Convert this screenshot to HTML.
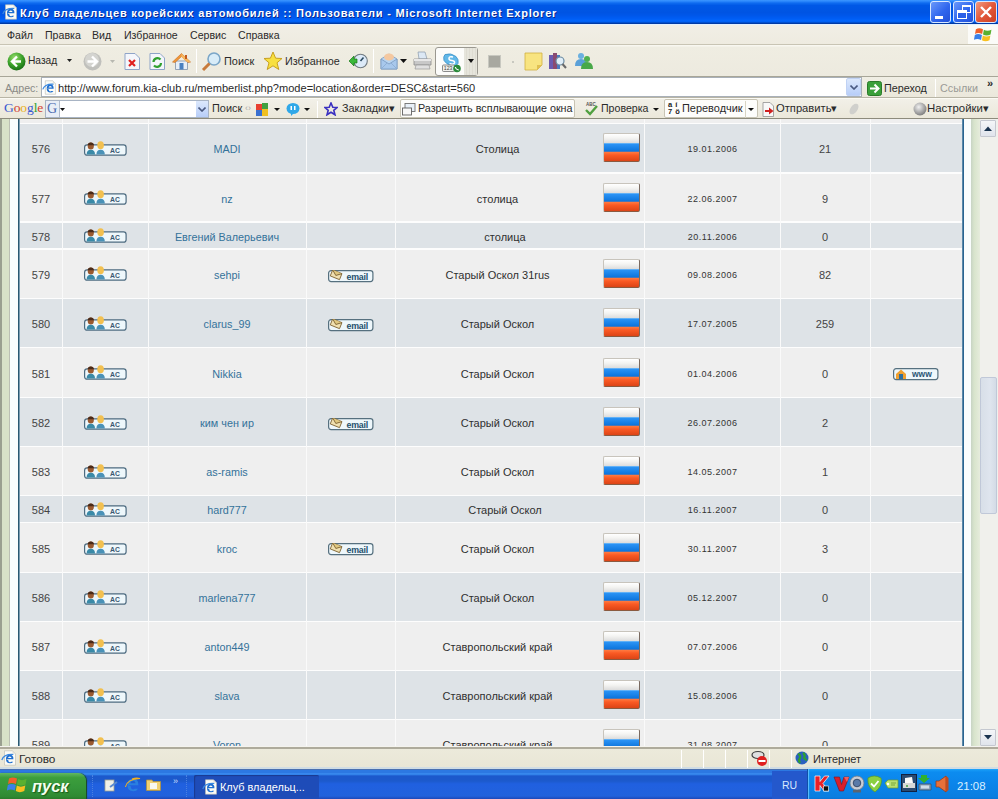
<!DOCTYPE html>
<html><head><meta charset="utf-8">
<style>
html,body{margin:0;padding:0;}
body{width:998px;height:799px;overflow:hidden;position:relative;background:#ece9d8;font-family:"Liberation Sans",sans-serif;}
div,span{position:absolute;box-sizing:border-box;}
.tb{white-space:nowrap;color:#2a2a2a;font-size:10.6px;line-height:12px;}
/* title bar */
#title{left:0;top:0;width:998px;height:25px;z-index:2;
 background:linear-gradient(to bottom,#3c96ff 0%,#2c88fc 5%,#0f6cf0 12%,#0058e6 22%,#0054e3 50%,#0057ea 62%,#005df4 74%,#0266fc 84%,#005ae8 89%,#0044b8 91%,#00349a 95.9%,#d8ecff 96%,#eef6ff 100%);}
#title .txt{left:20px;top:6px;color:#fff;font-weight:700;font-size:11px;line-height:14px;white-space:nowrap;letter-spacing:0.78px;text-shadow:1px 1px 0 #0a2a90;}
.wbtn{top:1px;width:21px;height:22px;border:1px solid #d8e8ff;border-radius:3px;}
/* menu */
#menu{left:0;top:24px;width:998px;height:21px;background:linear-gradient(#f1efe6,#eeebe0);border-bottom:1px solid #c8c4b4;}
#tool{left:0;top:45px;width:998px;height:32px;background:linear-gradient(#f8f7f0 0px,#f8f7f0 1px,#efede2 2px,#edeadf 100%);border-bottom:1px solid #a8a698;}
#addr{left:0;top:77px;width:998px;height:21px;background:linear-gradient(#f0eee4,#ebe8dc);border-bottom:1px solid #b8b5a6;}
#goog{left:0;top:98px;width:998px;height:21px;background:linear-gradient(#f2f0e8,#ebe8da);border-top:1px solid #fbfaf4;border-bottom:1px solid #8d8b7c;}
/* content */
#content{left:0;top:119px;width:998px;height:627px;background:#efefef;overflow:hidden;}
.row{left:20px;width:942px;}
.vsep{top:0;width:1px;height:628px;background:#fafafa;}
.t{text-align:center;white-space:nowrap;line-height:14px;}
.num{font-size:11px;color:#444;}
.link{font-size:10.8px;color:#34729a;}
.loc{font-size:11px;color:#303030;}
.date{font-size:9px;line-height:12px;color:#333;letter-spacing:0.5px;}
.flag{width:37px;height:29px;border-radius:2px;border:1px solid #c8c4bc;border-right-color:#7a6a60;border-bottom-color:#8a5a40;
 background:linear-gradient(#ffffff 0%,#f4f4f2 15%,#dedede 32%,#8cc8f8 33%,#2a92f4 38%,#0c74dc 64%,#ff7a40 67%,#fa5a24 78%,#dc4416 100%);}
/* status */
#status{left:0;top:746px;width:998px;height:22px;background:linear-gradient(#f4f3ee 0px,#f4f3ee 1px,#aeab9c 1px,#aeab9c 3px,#eceadb 3px,#e9e6d6 21.5px,#d0dce4 21.5px);}
#task{left:0;top:768px;width:998px;height:31px;background:linear-gradient(#d0dce4 0px,#d0dce4 0.8px,#4a70b0 0.8px,#4a70b0 1.8px,#2c78e2 1.8px,#2c78e2 5px,#3a8aee 5px,#3282ea 6.5px,#1c58cc 8px,#1c5acc 13px,#2060e0 16px,#2262dc 28px,#1e48b8 31px);}
</style></head><body>

<div id="title">
 <svg style="position:absolute;left:2px;top:4px" width="16" height="16" viewBox="0 0 16 16"><path d="M3.5 0.8 H11.5 L14.5 3.8 V15.2 H3.5z" fill="#fbfbf6" stroke="#b8b8b0" stroke-width="0.6"/><path d="M11.5 0.8 V3.8 H14.5" fill="#e0e0d8"/><path d="M5.2 9.3 H12.4 q0.3-4.6-3.6-4.6 q-3.8 0-3.8 4.3 q0 4.3 4 4.3 q2.3 0 3.2-1.6 h-2.3 q-0.4 0.5-1 0.5 q-1.6 0-1.6-2z M7 8 q0.2-1.6 1.8-1.6 q1.6 0 1.7 1.6z" fill="#1f6fd0"/><path d="M0.8 10 q2-6 11.5-5.5" stroke="#3a88e0" stroke-width="1.2" fill="none"/></svg>
 <div class="txt">Клуб владельцев корейских автомобилей :: Пользователи - Microsoft Internet Explorer</div>
 <div class="wbtn" style="left:930px;background:linear-gradient(135deg,#6a98fa,#2f66ee 55%,#2250d8)"><div style="left:4px;top:14px;width:8px;height:3px;background:#fff"></div></div>
 <div class="wbtn" style="left:953px;background:linear-gradient(135deg,#6a98fa,#2f66ee 55%,#2250d8)"><div style="left:8px;top:3px;width:9px;height:8px;border:1px solid #fff;border-top-width:2px"></div><div style="left:3px;top:8px;width:10px;height:9px;border:1px solid #fff;border-top-width:3px;background:#2a5fe8"></div></div>
 <div class="wbtn" style="left:975px;width:22px;background:linear-gradient(135deg,#f09a80,#e2583a 50%,#cc4024)"><svg style="position:absolute;left:3px;top:3px" width="14" height="14"><path d="M2 2 L12 12 M12 2 L2 12" stroke="#fff" stroke-width="2.4"/></svg></div>
</div>
<div id="menu">
 <div class="tb" style="left:7px;top:5px">Файл</div>
 <div class="tb" style="left:45px;top:5px">Правка</div>
 <div class="tb" style="left:92px;top:5px">Вид</div>
 <div class="tb" style="left:124px;top:5px">Избранное</div>
 <div class="tb" style="left:190px;top:5px">Сервис</div>
 <div class="tb" style="left:238px;top:5px">Справка</div>
 <div style="left:968px;top:0;width:30px;height:20px;background:#fbfbf8"></div>
 <svg style="position:absolute;left:974px;top:3px" width="18" height="16" viewBox="0 0 20 18"><path d="M2 2.5 C4.5 1 7 1 10 2.5 L9 8 C6 6.5 3.5 6.5 1 8z" fill="#f0602a"/><path d="M11 3 C13.5 4.5 16.5 4.5 19.5 3 L18.5 8.5 C15.5 10 12.5 10 10 8.5z" fill="#5ab030"/><path d="M0.8 9 C3.3 7.5 5.8 7.5 8.8 9 L7.8 14.5 C4.8 13 2.3 13 -0.2 14.5z" fill="#3a80e8"/><path d="M9.8 9.5 C12.3 11 15.3 11 18.3 9.5 L17.3 15 C14.3 16.5 11.3 16.5 8.8 15z" fill="#f8c020"/></svg>
</div>
<div id="tool">
 <svg style="position:absolute;left:7px;top:7px" width="19" height="19" viewBox="0 0 19 19"><defs><radialGradient id="gb" cx="40%" cy="30%" r="70%"><stop offset="0" stop-color="#9be070"/><stop offset="0.6" stop-color="#3aa02a"/><stop offset="1" stop-color="#1a7018"/></radialGradient></defs><circle cx="9.5" cy="9.5" r="9" fill="url(#gb)"/><path d="M10 4.5 L5 9.5 L10 14.5 M5.5 9.5 H14" stroke="#fff" stroke-width="2.4" fill="none"/></svg>
 <div class="tb" style="left:28px;top:10px;font-size:10.2px">Назад</div>
 <svg style="position:absolute;left:67px;top:14px" width="5" height="3"><path d="M0 0 H5 L2.5 3z" fill="#222"/></svg>
 <svg style="position:absolute;left:83px;top:7px" width="19" height="19" viewBox="0 0 19 19"><circle cx="9.5" cy="9.5" r="9" fill="#c0c0bc"/><circle cx="9" cy="8" r="7" fill="#d4d4d0"/><path d="M9 4.5 L14 9.5 L9 14.5 M4.5 9.5 H13.5" stroke="#fff" stroke-width="2.4" fill="none"/></svg>
 <svg style="position:absolute;left:110px;top:15px" width="5" height="3"><path d="M0 0 H5 L2.5 3z" fill="#b8b8b0"/></svg>
 <svg style="position:absolute;left:124px;top:8px" width="17" height="17" viewBox="0 0 17 17"><path d="M1 0.5 H11 L15.5 5 V16.5 H1z" fill="#f4f6fb" stroke="#8fa4c8"/><path d="M5 7 L11 13 M11 7 L5 13" stroke="#e02020" stroke-width="2.2"/></svg>
 <svg style="position:absolute;left:149px;top:8px" width="17" height="17" viewBox="0 0 17 17"><path d="M1 0.5 H11 L15.5 5 V16.5 H1z" fill="#f4f6fb" stroke="#8fa4c8"/><path d="M4.5 9 a4 4 0 0 1 7-2.5 M12 10 a4 4 0 0 1 -7 2.5" stroke="#30a030" stroke-width="2.2" fill="none"/></svg>
 <svg style="position:absolute;left:172px;top:7px" width="19" height="19" viewBox="0 0 19 19"><path d="M3.5 9 V17.5 H15.5 V9z" fill="#e8eef6" stroke="#8090a8" stroke-width="0.8"/><path d="M0.5 10 L9.5 1.5 L18.5 10 L16 10.5 L9.5 4.5 L3 10.5z" fill="#f09838" stroke="#c86a20" stroke-width="0.6"/><path d="M9.5 1.5 L18.5 10 L15 10 L9.5 5z" fill="#f8b860"/><rect x="7.5" y="11" width="4" height="6.5" fill="#4a80c0"/><rect x="13" y="3" width="2" height="4" fill="#c05a20"/></svg>
 <div style="left:196px;top:4px;width:1px;height:24px;background:#d0ccbc;border-right:1px solid #fff"></div>
 <svg style="position:absolute;left:201px;top:6px" width="21" height="21" viewBox="0 0 21 21"><circle cx="13" cy="8" r="6" fill="#d8ecf8" stroke="#7aa6c8" stroke-width="1.6"/><path d="M8.5 12.5 L2 19" stroke="#c87a3a" stroke-width="3"/></svg>
 <div class="tb" style="left:224px;top:10px;font-size:10.9px">Поиск</div>
 <svg style="position:absolute;left:263px;top:6px" width="20" height="20" viewBox="0 0 20 20"><path d="M10 1 L12.6 7.2 L19 7.5 L14 11.8 L15.8 18.5 L10 14.8 L4.2 18.5 L6 11.8 L1 7.5 L7.4 7.2z" fill="#f8e040" stroke="#c8a020" stroke-width="1"/></svg>
 <div class="tb" style="left:285px;top:10px;font-size:10.8px">Избранное</div>
 <svg style="position:absolute;left:348px;top:8px" width="20" height="17" viewBox="0 0 20 17"><circle cx="12.5" cy="8" r="6.8" fill="#dceaf8" stroke="#707a80" stroke-width="1.1"/><path d="M12.5 8 L15.5 4.5" stroke="#2a4a60" stroke-width="1.6"/><path d="M1 8 L6 3 V6 H9 V10 H6 V13z" fill="#3ab83a" stroke="#1a7a1a" stroke-width="0.7"/></svg>
 <div style="left:373px;top:4px;width:1px;height:24px;background:#d0ccbc;border-right:1px solid #fff"></div>
 <svg style="position:absolute;left:380px;top:6px" width="18" height="19" viewBox="0 0 18 19"><path d="M1 8 L9 3 L17 8 V18 H1z" fill="#b8d4f0" stroke="#7a9ac0" stroke-width="0.8"/><ellipse cx="9" cy="6" rx="5" ry="3.5" fill="#f4c8a0"/><path d="M1 8 L9 13 L17 8 V18 H1z" fill="#a8c8ec" stroke="#7a9ac0" stroke-width="0.8"/><path d="M1 18 L7 12 M17 18 L11 12" stroke="#8aaad0" stroke-width="0.8"/></svg>
 <svg style="position:absolute;left:400px;top:14px" width="7" height="4"><path d="M0 0 H7 L3.5 4z" fill="#111"/></svg>
 <svg style="position:absolute;left:413px;top:6px" width="19" height="19" viewBox="0 0 19 19"><path d="M5 1 H12 L14 8 H6z" fill="#dce8f4" stroke="#8a9aaa" stroke-width="0.7"/><path d="M1 8 H18 V14 H1z" fill="#c8c8c8" stroke="#8a8a8a" stroke-width="0.8"/><path d="M1 8 H18 V10 H1z" fill="#e8e8e8"/><path d="M3 14 H16 L17 18 H2z" fill="#e0e0e0" stroke="#9a9a9a" stroke-width="0.7"/></svg>
 <div style="left:435px;top:2px;width:43px;height:29px;border:1px solid #9a9890;border-radius:3px;background:#fcfcfa"></div>
 <div style="left:464px;top:3px;width:13px;height:27px;background:repeating-linear-gradient(to right,#e6e5dc 0,#e6e5dc 2px,#dedcd2 2px,#dedcd2 3px)"></div>
 <svg style="position:absolute;left:441px;top:8px" width="21" height="20" viewBox="0 0 21 20"><path d="M4 1.5 q6-2 11 2 q3 3 2 7 q-1 3-6 2 q-6-1-8-5 q-1-4 1-6z" fill="#62b8e8" stroke="#3a90c8" stroke-width="0.8"/><path d="M12 4 q-4-1-4 1.5 q0 2 3 2 q3 0.5 2.5 2.5 q-1 2-5 0.5" stroke="#fff" stroke-width="1.5" fill="none"/><rect x="1.5" y="12" width="12" height="6.5" rx="1" fill="#f0f0ec" stroke="#707070" stroke-width="0.8"/><text x="2.8" y="17.4" font-family="Liberation Sans" font-size="5.2" fill="#444">123</text><circle cx="16" cy="15.5" r="3.8" fill="#2a8a3a"/><path d="M14.3 14 q0.5 2.5 3.5 3" stroke="#fff" stroke-width="1.1" fill="none"/></svg>
 <svg style="position:absolute;left:468px;top:14px" width="6" height="4"><path d="M0 0 H6 L3 4z" fill="#111"/></svg>
 <div style="left:488px;top:10px;width:13px;height:13px;background:#a8a8a0;border:1px solid #c8c8c0"></div>
 <div style="left:512px;top:16px;width:2px;height:2px;background:#c8c8c0"></div>
 <svg style="position:absolute;left:524px;top:7px" width="19" height="19" viewBox="0 0 19 19"><path d="M1 1 H18 V13 L13 18 H1z" fill="#f8e480" stroke="#d0b040" stroke-width="0.8"/><path d="M13 18 V13 H18" fill="#e0c050"/></svg>
 <svg style="position:absolute;left:548px;top:6px" width="19" height="19" viewBox="0 0 19 19"><rect x="1" y="4" width="4" height="14" fill="#6a5ab0"/><rect x="5" y="2" width="4" height="16" fill="#8a4a70"/><rect x="9" y="4" width="3" height="14" fill="#4a7ac0"/><circle cx="12" cy="10" r="4" fill="#e0eef8" stroke="#6a8aa0" stroke-width="1.2"/><path d="M14.5 13 L18 17" stroke="#6a6a6a" stroke-width="2"/></svg>
 <svg style="position:absolute;left:574px;top:7px" width="19" height="18" viewBox="0 0 19 18"><circle cx="7" cy="4" r="3" fill="#6ab0e0"/><path d="M1 14 q0-7 6-7 q6 0 6 7z" fill="#5aa0d8"/><circle cx="13" cy="7" r="3" fill="#50b050"/><path d="M7 17 q0-7 6-7 q6 0 6 7z" fill="#48a848"/></svg>
</div>
<div id="addr">
 <div class="tb" style="left:5px;top:5px;color:#8a8a86;font-size:10.6px">Адрес:</div>
 <div style="left:41px;top:0px;width:821px;height:20px;background:#fff;border:1px solid #a9b0b8"></div>
 <svg style="position:absolute;left:42px;top:3px" width="15" height="15" viewBox="0 0 16 16"><path d="M3.5 0.8 H11.5 L14.5 3.8 V15.2 H3.5z" fill="#fbfbf6" stroke="#b8b8b0" stroke-width="0.6"/><path d="M11.5 0.8 V3.8 H14.5" fill="#e0e0d8"/><path d="M5.2 9.3 H12.4 q0.3-4.6-3.6-4.6 q-3.8 0-3.8 4.3 q0 4.3 4 4.3 q2.3 0 3.2-1.6 h-2.3 q-0.4 0.5-1 0.5 q-1.6 0-1.6-2z M7 8 q0.2-1.6 1.8-1.6 q1.6 0 1.7 1.6z" fill="#1f6fd0"/><path d="M0.8 10 q2-6 11.5-5.5" stroke="#3a88e0" stroke-width="1.2" fill="none"/></svg>
 <div class="tb" style="left:58px;top:5px;font-size:11.05px">http://www.forum.kia-club.ru/memberlist.php?mode=location&amp;order=DESC&amp;start=560</div>
 <div style="left:846px;top:1px;width:15px;height:18px;border-radius:2px;background:linear-gradient(#dce8fc,#b8cef8);border:1px solid #c0d2f4"></div>
 <svg style="position:absolute;left:850px;top:8px" width="8" height="5"><path d="M0.5 0.5 L4 4 L7.5 0.5" stroke="#4a5a80" stroke-width="1.6" fill="none"/></svg>
 <svg style="position:absolute;left:867px;top:4px" width="15" height="15" viewBox="0 0 15 15"><rect x="0.5" y="0.5" width="14" height="14" rx="2" fill="#3aa03a" stroke="#2a7a2a"/><path d="M3 7.5 H11 M7.5 3.5 L11.5 7.5 L7.5 11.5" stroke="#fff" stroke-width="2" fill="none"/></svg>
 <div class="tb" style="left:884px;top:5px;font-size:10.8px">Переход</div>
 <div style="left:935px;top:2px;width:1px;height:18px;background:#d8d4c4;border-right:1px solid #fff"></div>
 <div class="tb" style="left:940px;top:5px;font-size:10.8px;color:#9a9a96">Ссылки</div>
 <div class="tb" style="left:987px;top:0px;font-size:11px;font-weight:700">»</div>
</div>
<div id="goog">
 <div style="left:4px;top:1px;font-family:'Liberation Serif';font-size:13.5px;line-height:15px;font-weight:400;letter-spacing:-0.1px"><span style="position:static;color:#3a5ad0">G</span><span style="position:static;color:#d04030">o</span><span style="position:static;color:#e8b020">o</span><span style="position:static;color:#3a5ad0">g</span><span style="position:static;color:#30a030">l</span><span style="position:static;color:#d04030">e</span></div>
 <div style="left:45px;top:1px;width:164px;height:18px;background:#fff;border:1px solid #a8b4c4"></div>
 <div style="left:46px;top:2px;width:14px;height:16px;background:#e8eef6;border-right:1px solid #b0bccc"></div>
 <div style="left:47px;top:1px;font-family:'Liberation Serif';font-size:14px;line-height:18px;color:#4a6ab0">G</div>
 <svg style="position:absolute;left:60px;top:9px" width="5" height="3"><path d="M0 0 H5 L2.5 3z" fill="#111"/></svg>
 <div style="left:196px;top:2px;width:12px;height:16px;background:linear-gradient(#dce8fc,#b8cef8)"></div>
 <svg style="position:absolute;left:198px;top:8px" width="8" height="5"><path d="M0.5 0.5 L4 4 L7.5 0.5" stroke="#4a5a80" stroke-width="1.6" fill="none"/></svg>
 <div class="tb" style="left:212px;top:3px;font-size:10.9px">Поиск</div>
 <div class="tb" style="left:245px;top:3px;font-size:9px;color:#aaa">‹›</div>
 <svg style="position:absolute;left:255px;top:2px" width="14" height="16" viewBox="0 0 14 16"><rect x="1" y="3" width="6" height="6" fill="#e84030"/><rect x="7" y="2" width="6" height="6" fill="#40a040"/><rect x="1" y="9" width="6" height="6" fill="#3a70d0"/><rect x="7" y="8" width="6" height="7" fill="#f0c020"/></svg>
 <svg style="position:absolute;left:274px;top:9px" width="6" height="3"><path d="M0 0 H6 L3 3z" fill="#111"/></svg>
 <svg style="position:absolute;left:286px;top:3px" width="14" height="15" viewBox="0 0 14 15"><ellipse cx="7" cy="6.5" rx="6.5" ry="5.5" fill="#30a8e8"/><path d="M5 11 L5 14 L8 11z" fill="#30a8e8"/><rect x="4.5" y="4" width="1.5" height="4" fill="#fff"/><rect x="8" y="4" width="1.5" height="4" fill="#fff"/></svg>
 <svg style="position:absolute;left:304px;top:9px" width="6" height="3"><path d="M0 0 H6 L3 3z" fill="#111"/></svg>
 <div style="left:317px;top:2px;width:1px;height:17px;background:#d0ccbc;border-right:1px solid #fff"></div>
 <svg style="position:absolute;left:324px;top:3px" width="14" height="14" viewBox="0 0 14 14"><path d="M7 1 L8.8 5.2 L13.3 5.4 L9.8 8.3 L11 12.8 L7 10.3 L3 12.8 L4.2 8.3 L0.7 5.4 L5.2 5.2z" fill="none" stroke="#3a30c0" stroke-width="1.6"/></svg>
 <div class="tb" style="left:342px;top:3px;font-size:10.8px">Закладки▾</div>
 <div style="left:400px;top:0px;width:175px;height:19px;background:#fdfdfb;border:1px solid #c8c4b4;border-radius:2px"></div>
 <svg style="position:absolute;left:402px;top:4px" width="14" height="13" viewBox="0 0 14 13"><rect x="3" y="0.5" width="10" height="8" fill="#e8f0f8" stroke="#707070" stroke-width="0.9"/><rect x="0.5" y="5" width="9" height="7" fill="#f8f8f8" stroke="#606060" stroke-width="0.9"/></svg>
 <div class="tb" style="left:418px;top:3px;font-size:10.75px">Разрешить всплывающие окна</div>
 <svg style="position:absolute;left:585px;top:2px" width="13" height="15" viewBox="0 0 13 15"><text x="1" y="5" font-family="Liberation Sans" font-size="4.5" font-weight="700" fill="#555">ABC</text><path d="M1 9 L5 13 L12 5" stroke="#50a040" stroke-width="2.4" fill="none"/></svg>
 <div class="tb" style="left:601px;top:3px;font-size:10.6px">Проверка</div>
 <svg style="position:absolute;left:653px;top:9px" width="6" height="3"><path d="M0 0 H6 L3 3z" fill="#111"/></svg>
 <div style="left:664px;top:0px;width:94px;height:19px;background:#fdfdfb;border:1px solid #c8c4b4;border-radius:2px"></div>
 <div style="left:745px;top:2px;width:1px;height:17px;background:#d8d4c4"></div>
 <div class="tb" style="left:668px;top:2px;font-size:7.5px;line-height:7px;font-weight:700;color:#222;letter-spacing:0.5px">a&nbsp;í<br>7&nbsp;ö</div>
 <div class="tb" style="left:682px;top:3px;font-size:10.95px">Переводчик</div>
 <svg style="position:absolute;left:748px;top:9px" width="6" height="3"><path d="M0 0 H6 L3 3z" fill="#111"/></svg>
 <svg style="position:absolute;left:762px;top:3px" width="13" height="15" viewBox="0 0 13 15"><path d="M1 0.5 H8 L11.5 4 V14.5 H1z" fill="#f8f8f8" stroke="#909090" stroke-width="0.8"/><path d="M3 8 H7 V5.5 L11.5 9 L7 12.5 V10 H3z" fill="#d02020"/></svg>
 <div class="tb" style="left:776px;top:3px;font-size:11.2px">Отправить▾</div>
 <svg style="position:absolute;left:848px;top:3px" width="12" height="14" viewBox="0 0 12 14"><ellipse cx="6" cy="7" rx="3.5" ry="6" transform="rotate(35 6 7)" fill="#d0d0cc"/></svg>
 <svg style="position:absolute;left:913px;top:3px" width="14" height="14" viewBox="0 0 14 14"><defs><radialGradient id="gs" cx="40%" cy="35%" r="65%"><stop offset="0" stop-color="#f0f0f0"/><stop offset="1" stop-color="#808080"/></radialGradient></defs><circle cx="7" cy="7" r="6.5" fill="url(#gs)"/></svg>
 <div class="tb" style="left:927px;top:3px;font-size:11.4px">Настройки▾</div>
</div>
<div id="content">
 <div style="left:0;top:0;width:2px;height:628px;background:#9aa090"></div>
 <div style="left:2px;top:0;width:7px;height:628px;background:#d8e2c8"></div>
 <div style="left:9px;top:0;width:1px;height:628px;background:#bcc0b4"></div>
 <div style="left:10px;top:0;width:8px;height:628px;background:#fafdfd"></div>
 <div style="left:18px;top:0;width:1px;height:628px;background:#2a5870"></div><div style="left:19px;top:0;width:1px;height:628px;background:#7a9cb0"></div>
 <div style="left:20px;top:0;width:942px;height:628px;background:#fdfdfd"></div>
<div class="row" style="top:-19px;height:23px;background:#efefef"></div>
<div class="row" style="top:5px;height:48px;background:#dee3e7"></div>
<div class="t num" style="left:20px;width:42px;top:23.1px">576</div>
<div class="prof" style="left:84px;top:20.5px"><svg width="43" height="17" viewBox="0 0 43 17"><rect x="0.6" y="4.9" width="41.5" height="10.3" rx="2.5" fill="#eef7fb" stroke="#4d6b80" stroke-width="1.2"/><ellipse cx="6.8" cy="6" rx="3.1" ry="3.5" fill="#9a5a30"/><path d="M6.8 2.5 a3.2 3.2 0 0 1 3.2 2.8 h-6.4 a3.2 3.2 0 0 1 3.2-2.8z" fill="#4a2a18"/><path d="M2.6 14.5 q0-4.8 4.2-4.8 q4.2 0 4.2 4.8z" fill="#3a8aa8"/><ellipse cx="16.6" cy="5.2" rx="3.3" ry="4" fill="#f2c050"/><path d="M12.4 14.5 q0-4.8 4.2-4.8 q4.2 0 4.2 4.8z" fill="#4a92b8"/><text x="26" y="13" font-family="Liberation Sans" font-size="6.8" font-weight="700" fill="#3a5670">AC</text></svg></div>
<div class="t link" style="left:148px;width:158px;top:23.1px">MADI</div>
<div class="t loc" style="left:395px;width:205px;top:23.1px">Столица</div>
<div class="flag" style="left:603px;top:14.0px"></div>
<div class="t date" style="left:645px;width:135px;top:24.0px">19.01.2006</div>
<div class="t num" style="left:780px;width:90px;top:23.1px">21</div>
<div class="row" style="top:55px;height:47px;background:#efefef"></div>
<div class="t num" style="left:20px;width:42px;top:72.6px">577</div>
<div class="prof" style="left:84px;top:70.0px"><svg width="43" height="17" viewBox="0 0 43 17"><rect x="0.6" y="4.9" width="41.5" height="10.3" rx="2.5" fill="#eef7fb" stroke="#4d6b80" stroke-width="1.2"/><ellipse cx="6.8" cy="6" rx="3.1" ry="3.5" fill="#9a5a30"/><path d="M6.8 2.5 a3.2 3.2 0 0 1 3.2 2.8 h-6.4 a3.2 3.2 0 0 1 3.2-2.8z" fill="#4a2a18"/><path d="M2.6 14.5 q0-4.8 4.2-4.8 q4.2 0 4.2 4.8z" fill="#3a8aa8"/><ellipse cx="16.6" cy="5.2" rx="3.3" ry="4" fill="#f2c050"/><path d="M12.4 14.5 q0-4.8 4.2-4.8 q4.2 0 4.2 4.8z" fill="#4a92b8"/><text x="26" y="13" font-family="Liberation Sans" font-size="6.8" font-weight="700" fill="#3a5670">AC</text></svg></div>
<div class="t link" style="left:148px;width:158px;top:72.6px">nz</div>
<div class="t loc" style="left:395px;width:205px;top:72.6px">столица</div>
<div class="flag" style="left:603px;top:63.5px"></div>
<div class="t date" style="left:645px;width:135px;top:73.5px">22.06.2007</div>
<div class="t num" style="left:780px;width:90px;top:72.6px">9</div>
<div class="row" style="top:104px;height:25px;background:#dee3e7"></div>
<div class="t num" style="left:20px;width:42px;top:110.6px">578</div>
<div class="prof" style="left:84px;top:108.0px"><svg width="43" height="17" viewBox="0 0 43 17"><rect x="0.6" y="4.9" width="41.5" height="10.3" rx="2.5" fill="#eef7fb" stroke="#4d6b80" stroke-width="1.2"/><ellipse cx="6.8" cy="6" rx="3.1" ry="3.5" fill="#9a5a30"/><path d="M6.8 2.5 a3.2 3.2 0 0 1 3.2 2.8 h-6.4 a3.2 3.2 0 0 1 3.2-2.8z" fill="#4a2a18"/><path d="M2.6 14.5 q0-4.8 4.2-4.8 q4.2 0 4.2 4.8z" fill="#3a8aa8"/><ellipse cx="16.6" cy="5.2" rx="3.3" ry="4" fill="#f2c050"/><path d="M12.4 14.5 q0-4.8 4.2-4.8 q4.2 0 4.2 4.8z" fill="#4a92b8"/><text x="26" y="13" font-family="Liberation Sans" font-size="6.8" font-weight="700" fill="#3a5670">AC</text></svg></div>
<div class="t link" style="left:148px;width:158px;top:110.6px">Евгений Валерьевич</div>
<div class="t loc" style="left:395px;width:220px;top:110.6px">столица</div>
<div class="t date" style="left:645px;width:135px;top:111.5px">20.11.2006</div>
<div class="t num" style="left:780px;width:90px;top:110.6px">0</div>
<div class="row" style="top:130.5px;height:48.5px;background:#efefef"></div>
<div class="t num" style="left:20px;width:42px;top:148.85px">579</div>
<div class="prof" style="left:84px;top:146.25px"><svg width="43" height="17" viewBox="0 0 43 17"><rect x="0.6" y="4.9" width="41.5" height="10.3" rx="2.5" fill="#eef7fb" stroke="#4d6b80" stroke-width="1.2"/><ellipse cx="6.8" cy="6" rx="3.1" ry="3.5" fill="#9a5a30"/><path d="M6.8 2.5 a3.2 3.2 0 0 1 3.2 2.8 h-6.4 a3.2 3.2 0 0 1 3.2-2.8z" fill="#4a2a18"/><path d="M2.6 14.5 q0-4.8 4.2-4.8 q4.2 0 4.2 4.8z" fill="#3a8aa8"/><ellipse cx="16.6" cy="5.2" rx="3.3" ry="4" fill="#f2c050"/><path d="M12.4 14.5 q0-4.8 4.2-4.8 q4.2 0 4.2 4.8z" fill="#4a92b8"/><text x="26" y="13" font-family="Liberation Sans" font-size="6.8" font-weight="700" fill="#3a5670">AC</text></svg></div>
<div class="t link" style="left:148px;width:158px;top:148.85px">sehpi</div>
<div class="btn" style="left:328px;top:149.55px"><svg width="46" height="13" viewBox="0 0 46 13"><rect x="0.6" y="0.6" width="44.3" height="11" rx="2.5" fill="#eef7fb" stroke="#56707f" stroke-width="1.2"/><g transform="rotate(22 8 5)"><rect x="3" y="1.5" width="10" height="6.5" fill="#f0e0b0" stroke="#7a6030" stroke-width="0.8"/><path d="M3 1.5 L8 5.5 L13 1.5" stroke="#7a6030" stroke-width="0.8" fill="#e0c880"/></g><text x="18.6" y="9.5" font-family="Liberation Sans" font-size="8.8" font-weight="700" fill="#24506e" textLength="21.5">email</text></svg></div>
<div class="t loc" style="left:395px;width:205px;top:148.85px">Старый Оскол 31rus</div>
<div class="flag" style="left:603px;top:139.75px"></div>
<div class="t date" style="left:645px;width:135px;top:149.75px">09.08.2006</div>
<div class="t num" style="left:780px;width:90px;top:148.85px">82</div>
<div class="row" style="top:180px;height:48px;background:#dee3e7"></div>
<div class="t num" style="left:20px;width:42px;top:198.1px">580</div>
<div class="prof" style="left:84px;top:195.5px"><svg width="43" height="17" viewBox="0 0 43 17"><rect x="0.6" y="4.9" width="41.5" height="10.3" rx="2.5" fill="#eef7fb" stroke="#4d6b80" stroke-width="1.2"/><ellipse cx="6.8" cy="6" rx="3.1" ry="3.5" fill="#9a5a30"/><path d="M6.8 2.5 a3.2 3.2 0 0 1 3.2 2.8 h-6.4 a3.2 3.2 0 0 1 3.2-2.8z" fill="#4a2a18"/><path d="M2.6 14.5 q0-4.8 4.2-4.8 q4.2 0 4.2 4.8z" fill="#3a8aa8"/><ellipse cx="16.6" cy="5.2" rx="3.3" ry="4" fill="#f2c050"/><path d="M12.4 14.5 q0-4.8 4.2-4.8 q4.2 0 4.2 4.8z" fill="#4a92b8"/><text x="26" y="13" font-family="Liberation Sans" font-size="6.8" font-weight="700" fill="#3a5670">AC</text></svg></div>
<div class="t link" style="left:148px;width:158px;top:198.1px">clarus_99</div>
<div class="btn" style="left:328px;top:198.8px"><svg width="46" height="13" viewBox="0 0 46 13"><rect x="0.6" y="0.6" width="44.3" height="11" rx="2.5" fill="#eef7fb" stroke="#56707f" stroke-width="1.2"/><g transform="rotate(22 8 5)"><rect x="3" y="1.5" width="10" height="6.5" fill="#f0e0b0" stroke="#7a6030" stroke-width="0.8"/><path d="M3 1.5 L8 5.5 L13 1.5" stroke="#7a6030" stroke-width="0.8" fill="#e0c880"/></g><text x="18.6" y="9.5" font-family="Liberation Sans" font-size="8.8" font-weight="700" fill="#24506e" textLength="21.5">email</text></svg></div>
<div class="t loc" style="left:395px;width:205px;top:198.1px">Старый Оскол</div>
<div class="flag" style="left:603px;top:189.0px"></div>
<div class="t date" style="left:645px;width:135px;top:199.0px">17.07.2005</div>
<div class="t num" style="left:780px;width:90px;top:198.1px">259</div>
<div class="row" style="top:229px;height:49px;background:#efefef"></div>
<div class="t num" style="left:20px;width:42px;top:247.6px">581</div>
<div class="prof" style="left:84px;top:245.0px"><svg width="43" height="17" viewBox="0 0 43 17"><rect x="0.6" y="4.9" width="41.5" height="10.3" rx="2.5" fill="#eef7fb" stroke="#4d6b80" stroke-width="1.2"/><ellipse cx="6.8" cy="6" rx="3.1" ry="3.5" fill="#9a5a30"/><path d="M6.8 2.5 a3.2 3.2 0 0 1 3.2 2.8 h-6.4 a3.2 3.2 0 0 1 3.2-2.8z" fill="#4a2a18"/><path d="M2.6 14.5 q0-4.8 4.2-4.8 q4.2 0 4.2 4.8z" fill="#3a8aa8"/><ellipse cx="16.6" cy="5.2" rx="3.3" ry="4" fill="#f2c050"/><path d="M12.4 14.5 q0-4.8 4.2-4.8 q4.2 0 4.2 4.8z" fill="#4a92b8"/><text x="26" y="13" font-family="Liberation Sans" font-size="6.8" font-weight="700" fill="#3a5670">AC</text></svg></div>
<div class="t link" style="left:148px;width:158px;top:247.6px">Nikkia</div>
<div class="t loc" style="left:395px;width:205px;top:247.6px">Старый Оскол</div>
<div class="flag" style="left:603px;top:238.5px"></div>
<div class="t date" style="left:645px;width:135px;top:248.5px">01.04.2006</div>
<div class="t num" style="left:780px;width:90px;top:247.6px">0</div>
<div class="btn" style="left:893px;top:247.5px"><svg width="46" height="13" viewBox="0 0 46 13"><rect x="0.6" y="0.6" width="44.3" height="11" rx="2.5" fill="#eef7fb" stroke="#56707f" stroke-width="1.2"/><path d="M3 6 l5-4.5 l5 4.5 v5 h-10z" fill="#f0a030"/><rect x="6" y="6" width="4" height="5" fill="#3070a0"/><text x="19" y="9.3" font-family="Liberation Sans" font-size="8.5" font-weight="700" fill="#2a5575">www</text></svg></div>
<div class="row" style="top:279px;height:48px;background:#dee3e7"></div>
<div class="t num" style="left:20px;width:42px;top:297.1px">582</div>
<div class="prof" style="left:84px;top:294.5px"><svg width="43" height="17" viewBox="0 0 43 17"><rect x="0.6" y="4.9" width="41.5" height="10.3" rx="2.5" fill="#eef7fb" stroke="#4d6b80" stroke-width="1.2"/><ellipse cx="6.8" cy="6" rx="3.1" ry="3.5" fill="#9a5a30"/><path d="M6.8 2.5 a3.2 3.2 0 0 1 3.2 2.8 h-6.4 a3.2 3.2 0 0 1 3.2-2.8z" fill="#4a2a18"/><path d="M2.6 14.5 q0-4.8 4.2-4.8 q4.2 0 4.2 4.8z" fill="#3a8aa8"/><ellipse cx="16.6" cy="5.2" rx="3.3" ry="4" fill="#f2c050"/><path d="M12.4 14.5 q0-4.8 4.2-4.8 q4.2 0 4.2 4.8z" fill="#4a92b8"/><text x="26" y="13" font-family="Liberation Sans" font-size="6.8" font-weight="700" fill="#3a5670">AC</text></svg></div>
<div class="t link" style="left:148px;width:158px;top:297.1px">ким чен ир</div>
<div class="btn" style="left:328px;top:297.8px"><svg width="46" height="13" viewBox="0 0 46 13"><rect x="0.6" y="0.6" width="44.3" height="11" rx="2.5" fill="#eef7fb" stroke="#56707f" stroke-width="1.2"/><g transform="rotate(22 8 5)"><rect x="3" y="1.5" width="10" height="6.5" fill="#f0e0b0" stroke="#7a6030" stroke-width="0.8"/><path d="M3 1.5 L8 5.5 L13 1.5" stroke="#7a6030" stroke-width="0.8" fill="#e0c880"/></g><text x="18.6" y="9.5" font-family="Liberation Sans" font-size="8.8" font-weight="700" fill="#24506e" textLength="21.5">email</text></svg></div>
<div class="t loc" style="left:395px;width:205px;top:297.1px">Старый Оскол</div>
<div class="flag" style="left:603px;top:288.0px"></div>
<div class="t date" style="left:645px;width:135px;top:298.0px">26.07.2006</div>
<div class="t num" style="left:780px;width:90px;top:297.1px">2</div>
<div class="row" style="top:328px;height:48px;background:#efefef"></div>
<div class="t num" style="left:20px;width:42px;top:346.1px">583</div>
<div class="prof" style="left:84px;top:343.5px"><svg width="43" height="17" viewBox="0 0 43 17"><rect x="0.6" y="4.9" width="41.5" height="10.3" rx="2.5" fill="#eef7fb" stroke="#4d6b80" stroke-width="1.2"/><ellipse cx="6.8" cy="6" rx="3.1" ry="3.5" fill="#9a5a30"/><path d="M6.8 2.5 a3.2 3.2 0 0 1 3.2 2.8 h-6.4 a3.2 3.2 0 0 1 3.2-2.8z" fill="#4a2a18"/><path d="M2.6 14.5 q0-4.8 4.2-4.8 q4.2 0 4.2 4.8z" fill="#3a8aa8"/><ellipse cx="16.6" cy="5.2" rx="3.3" ry="4" fill="#f2c050"/><path d="M12.4 14.5 q0-4.8 4.2-4.8 q4.2 0 4.2 4.8z" fill="#4a92b8"/><text x="26" y="13" font-family="Liberation Sans" font-size="6.8" font-weight="700" fill="#3a5670">AC</text></svg></div>
<div class="t link" style="left:148px;width:158px;top:346.1px">as-ramis</div>
<div class="t loc" style="left:395px;width:205px;top:346.1px">Старый Оскол</div>
<div class="flag" style="left:603px;top:337.0px"></div>
<div class="t date" style="left:645px;width:135px;top:347.0px">14.05.2007</div>
<div class="t num" style="left:780px;width:90px;top:346.1px">1</div>
<div class="row" style="top:377px;height:26px;background:#dee3e7"></div>
<div class="t num" style="left:20px;width:42px;top:384.1px">584</div>
<div class="prof" style="left:84px;top:381.5px"><svg width="43" height="17" viewBox="0 0 43 17"><rect x="0.6" y="4.9" width="41.5" height="10.3" rx="2.5" fill="#eef7fb" stroke="#4d6b80" stroke-width="1.2"/><ellipse cx="6.8" cy="6" rx="3.1" ry="3.5" fill="#9a5a30"/><path d="M6.8 2.5 a3.2 3.2 0 0 1 3.2 2.8 h-6.4 a3.2 3.2 0 0 1 3.2-2.8z" fill="#4a2a18"/><path d="M2.6 14.5 q0-4.8 4.2-4.8 q4.2 0 4.2 4.8z" fill="#3a8aa8"/><ellipse cx="16.6" cy="5.2" rx="3.3" ry="4" fill="#f2c050"/><path d="M12.4 14.5 q0-4.8 4.2-4.8 q4.2 0 4.2 4.8z" fill="#4a92b8"/><text x="26" y="13" font-family="Liberation Sans" font-size="6.8" font-weight="700" fill="#3a5670">AC</text></svg></div>
<div class="t link" style="left:148px;width:158px;top:384.1px">hard777</div>
<div class="t loc" style="left:395px;width:220px;top:384.1px">Старый Оскол</div>
<div class="t date" style="left:645px;width:135px;top:385.0px">16.11.2007</div>
<div class="t num" style="left:780px;width:90px;top:384.1px">0</div>
<div class="row" style="top:404px;height:49px;background:#efefef"></div>
<div class="t num" style="left:20px;width:42px;top:422.6px">585</div>
<div class="prof" style="left:84px;top:420.0px"><svg width="43" height="17" viewBox="0 0 43 17"><rect x="0.6" y="4.9" width="41.5" height="10.3" rx="2.5" fill="#eef7fb" stroke="#4d6b80" stroke-width="1.2"/><ellipse cx="6.8" cy="6" rx="3.1" ry="3.5" fill="#9a5a30"/><path d="M6.8 2.5 a3.2 3.2 0 0 1 3.2 2.8 h-6.4 a3.2 3.2 0 0 1 3.2-2.8z" fill="#4a2a18"/><path d="M2.6 14.5 q0-4.8 4.2-4.8 q4.2 0 4.2 4.8z" fill="#3a8aa8"/><ellipse cx="16.6" cy="5.2" rx="3.3" ry="4" fill="#f2c050"/><path d="M12.4 14.5 q0-4.8 4.2-4.8 q4.2 0 4.2 4.8z" fill="#4a92b8"/><text x="26" y="13" font-family="Liberation Sans" font-size="6.8" font-weight="700" fill="#3a5670">AC</text></svg></div>
<div class="t link" style="left:148px;width:158px;top:422.6px">kroc</div>
<div class="btn" style="left:328px;top:423.3px"><svg width="46" height="13" viewBox="0 0 46 13"><rect x="0.6" y="0.6" width="44.3" height="11" rx="2.5" fill="#eef7fb" stroke="#56707f" stroke-width="1.2"/><g transform="rotate(22 8 5)"><rect x="3" y="1.5" width="10" height="6.5" fill="#f0e0b0" stroke="#7a6030" stroke-width="0.8"/><path d="M3 1.5 L8 5.5 L13 1.5" stroke="#7a6030" stroke-width="0.8" fill="#e0c880"/></g><text x="18.6" y="9.5" font-family="Liberation Sans" font-size="8.8" font-weight="700" fill="#24506e" textLength="21.5">email</text></svg></div>
<div class="t loc" style="left:395px;width:205px;top:422.6px">Старый Оскол</div>
<div class="flag" style="left:603px;top:413.5px"></div>
<div class="t date" style="left:645px;width:135px;top:423.5px">30.11.2007</div>
<div class="t num" style="left:780px;width:90px;top:422.6px">3</div>
<div class="row" style="top:454px;height:48px;background:#dee3e7"></div>
<div class="t num" style="left:20px;width:42px;top:472.1px">586</div>
<div class="prof" style="left:84px;top:469.5px"><svg width="43" height="17" viewBox="0 0 43 17"><rect x="0.6" y="4.9" width="41.5" height="10.3" rx="2.5" fill="#eef7fb" stroke="#4d6b80" stroke-width="1.2"/><ellipse cx="6.8" cy="6" rx="3.1" ry="3.5" fill="#9a5a30"/><path d="M6.8 2.5 a3.2 3.2 0 0 1 3.2 2.8 h-6.4 a3.2 3.2 0 0 1 3.2-2.8z" fill="#4a2a18"/><path d="M2.6 14.5 q0-4.8 4.2-4.8 q4.2 0 4.2 4.8z" fill="#3a8aa8"/><ellipse cx="16.6" cy="5.2" rx="3.3" ry="4" fill="#f2c050"/><path d="M12.4 14.5 q0-4.8 4.2-4.8 q4.2 0 4.2 4.8z" fill="#4a92b8"/><text x="26" y="13" font-family="Liberation Sans" font-size="6.8" font-weight="700" fill="#3a5670">AC</text></svg></div>
<div class="t link" style="left:148px;width:158px;top:472.1px">marlena777</div>
<div class="t loc" style="left:395px;width:205px;top:472.1px">Старый Оскол</div>
<div class="flag" style="left:603px;top:463.0px"></div>
<div class="t date" style="left:645px;width:135px;top:473.0px">05.12.2007</div>
<div class="t num" style="left:780px;width:90px;top:472.1px">0</div>
<div class="row" style="top:503px;height:48px;background:#efefef"></div>
<div class="t num" style="left:20px;width:42px;top:521.1px">587</div>
<div class="prof" style="left:84px;top:518.5px"><svg width="43" height="17" viewBox="0 0 43 17"><rect x="0.6" y="4.9" width="41.5" height="10.3" rx="2.5" fill="#eef7fb" stroke="#4d6b80" stroke-width="1.2"/><ellipse cx="6.8" cy="6" rx="3.1" ry="3.5" fill="#9a5a30"/><path d="M6.8 2.5 a3.2 3.2 0 0 1 3.2 2.8 h-6.4 a3.2 3.2 0 0 1 3.2-2.8z" fill="#4a2a18"/><path d="M2.6 14.5 q0-4.8 4.2-4.8 q4.2 0 4.2 4.8z" fill="#3a8aa8"/><ellipse cx="16.6" cy="5.2" rx="3.3" ry="4" fill="#f2c050"/><path d="M12.4 14.5 q0-4.8 4.2-4.8 q4.2 0 4.2 4.8z" fill="#4a92b8"/><text x="26" y="13" font-family="Liberation Sans" font-size="6.8" font-weight="700" fill="#3a5670">AC</text></svg></div>
<div class="t link" style="left:148px;width:158px;top:521.1px">anton449</div>
<div class="t loc" style="left:395px;width:205px;top:521.1px">Ставропольский край</div>
<div class="flag" style="left:603px;top:512.0px"></div>
<div class="t date" style="left:645px;width:135px;top:522.0px">07.07.2006</div>
<div class="t num" style="left:780px;width:90px;top:521.1px">0</div>
<div class="row" style="top:552px;height:48px;background:#dee3e7"></div>
<div class="t num" style="left:20px;width:42px;top:570.1px">588</div>
<div class="prof" style="left:84px;top:567.5px"><svg width="43" height="17" viewBox="0 0 43 17"><rect x="0.6" y="4.9" width="41.5" height="10.3" rx="2.5" fill="#eef7fb" stroke="#4d6b80" stroke-width="1.2"/><ellipse cx="6.8" cy="6" rx="3.1" ry="3.5" fill="#9a5a30"/><path d="M6.8 2.5 a3.2 3.2 0 0 1 3.2 2.8 h-6.4 a3.2 3.2 0 0 1 3.2-2.8z" fill="#4a2a18"/><path d="M2.6 14.5 q0-4.8 4.2-4.8 q4.2 0 4.2 4.8z" fill="#3a8aa8"/><ellipse cx="16.6" cy="5.2" rx="3.3" ry="4" fill="#f2c050"/><path d="M12.4 14.5 q0-4.8 4.2-4.8 q4.2 0 4.2 4.8z" fill="#4a92b8"/><text x="26" y="13" font-family="Liberation Sans" font-size="6.8" font-weight="700" fill="#3a5670">AC</text></svg></div>
<div class="t link" style="left:148px;width:158px;top:570.1px">slava</div>
<div class="t loc" style="left:395px;width:205px;top:570.1px">Ставропольский край</div>
<div class="flag" style="left:603px;top:561.0px"></div>
<div class="t date" style="left:645px;width:135px;top:571.0px">15.08.2006</div>
<div class="t num" style="left:780px;width:90px;top:570.1px">0</div>
<div class="row" style="top:601px;height:48px;background:#efefef"></div>
<div class="t num" style="left:20px;width:42px;top:619.1px">589</div>
<div class="prof" style="left:84px;top:616.5px"><svg width="43" height="17" viewBox="0 0 43 17"><rect x="0.6" y="4.9" width="41.5" height="10.3" rx="2.5" fill="#eef7fb" stroke="#4d6b80" stroke-width="1.2"/><ellipse cx="6.8" cy="6" rx="3.1" ry="3.5" fill="#9a5a30"/><path d="M6.8 2.5 a3.2 3.2 0 0 1 3.2 2.8 h-6.4 a3.2 3.2 0 0 1 3.2-2.8z" fill="#4a2a18"/><path d="M2.6 14.5 q0-4.8 4.2-4.8 q4.2 0 4.2 4.8z" fill="#3a8aa8"/><ellipse cx="16.6" cy="5.2" rx="3.3" ry="4" fill="#f2c050"/><path d="M12.4 14.5 q0-4.8 4.2-4.8 q4.2 0 4.2 4.8z" fill="#4a92b8"/><text x="26" y="13" font-family="Liberation Sans" font-size="6.8" font-weight="700" fill="#3a5670">AC</text></svg></div>
<div class="t link" style="left:148px;width:158px;top:619.1px">Voron</div>
<div class="t loc" style="left:395px;width:205px;top:619.1px">Ставропольский край</div>
<div class="flag" style="left:603px;top:610.0px"></div>
<div class="t date" style="left:645px;width:135px;top:620.0px">31.08.2007</div>
<div class="t num" style="left:780px;width:90px;top:619.1px">0</div>
<div class="vsep" style="left:62px"></div>
<div class="vsep" style="left:148px"></div>
<div class="vsep" style="left:306px"></div>
<div class="vsep" style="left:395px"></div>
<div class="vsep" style="left:644px"></div>
<div class="vsep" style="left:780px"></div>
<div class="vsep" style="left:870px"></div>
 <div style="left:962px;top:0;width:1px;height:628px;background:#5a88a8"></div><div style="left:963px;top:0;width:1px;height:628px;background:#2a6490"></div>
 <div style="left:964px;top:0;width:7px;height:628px;background:#fafdfd"></div>
 <div style="left:971px;top:0;width:9px;height:628px;background:linear-gradient(to right,#c8d4c4,#d8e4cc 35%,#e6ecdc)"></div>
 <div style="left:980px;top:0;width:18px;height:628px;background:#f0f0ec"></div>
 <div style="left:980px;top:1px;width:16px;height:17px;background:linear-gradient(#f4f6f8,#e0e4ec);border:1px solid #c4c8d0;border-radius:1px"></div>
 <svg style="position:absolute;left:984px;top:7px" width="8" height="5"><path d="M0 5 L4 0.5 L8 5z" fill="#1a3450"/></svg>
 <div style="left:980px;top:258px;width:17px;height:137px;background:linear-gradient(to right,#d8dfe8,#dfe5ee 60%,#d4dbe6);border:1px solid #c0c8d8;border-radius:2px"></div>
 <div style="left:980px;top:610px;width:16px;height:17px;background:linear-gradient(#f4f6f8,#e0e4ec);border:1px solid #c4c8d0;border-radius:1px"></div>
 <svg style="position:absolute;left:984px;top:616px" width="8" height="5"><path d="M0 0 L4 4.5 L8 0z" fill="#1a3450"/></svg>
</div>
<div id="status">
 <svg style="position:absolute;left:1px;top:4px" width="16" height="16" viewBox="0 0 16 16"><path d="M3.5 0.8 H11.5 L14.5 3.8 V15.2 H3.5z" fill="#fbfbf6" stroke="#b8b8b0" stroke-width="0.6"/><path d="M11.5 0.8 V3.8 H14.5" fill="#e0e0d8"/><path d="M5.2 9.3 H12.4 q0.3-4.6-3.6-4.6 q-3.8 0-3.8 4.3 q0 4.3 4 4.3 q2.3 0 3.2-1.6 h-2.3 q-0.4 0.5-1 0.5 q-1.6 0-1.6-2z M7 8 q0.2-1.6 1.8-1.6 q1.6 0 1.7 1.6z" fill="#1f6fd0"/><path d="M0.8 10 q2-6 11.5-5.5" stroke="#3a88e0" stroke-width="1.2" fill="none"/></svg>
 <div class="tb" style="left:19px;top:7px;font-size:11.8px">Готово</div>
 <div style="left:681px;top:4px;width:1px;height:18px;background:#d0ccbc;border-right:1px solid #fff"></div>
 <div style="left:703px;top:4px;width:1px;height:18px;background:#d0ccbc;border-right:1px solid #fff"></div>
 <div style="left:725px;top:4px;width:1px;height:18px;background:#d0ccbc;border-right:1px solid #fff"></div>
 <div style="left:747px;top:4px;width:1px;height:18px;background:#d0ccbc;border-right:1px solid #fff"></div>
 <div style="left:769px;top:4px;width:1px;height:18px;background:#d0ccbc;border-right:1px solid #fff"></div>
 <div style="left:791px;top:4px;width:1px;height:18px;background:#d0ccbc;border-right:1px solid #fff"></div>
 <svg style="position:absolute;left:751px;top:4px" width="17" height="17" viewBox="0 0 17 17"><ellipse cx="7" cy="5" rx="6" ry="3.5" fill="#e0e0e0" stroke="#404040" stroke-width="1.2"/><circle cx="11" cy="11" r="5" fill="#e02020"/><rect x="7.5" y="10" width="7" height="2" fill="#fff"/></svg>
 <svg style="position:absolute;left:795px;top:5px" width="14" height="14" viewBox="0 0 14 14"><circle cx="7" cy="7" r="6.5" fill="#2a60c0"/><path d="M3 3 q3 1 2 4 q-2 2 0 5 M8 2 q3 2 1 5 q2 2 3 2" stroke="#30a030" stroke-width="2.2" fill="none"/></svg>
 <div class="tb" style="left:813px;top:7px;font-size:11px">Интернет</div>
</div>
<div id="task">
  <div style="left:0;top:5px;width:86px;height:26px;border-radius:0 8px 0 0;background:linear-gradient(#62b862 0%,#3c9e3c 18%,#35963a 55%,#2f8a32 90%,#2a7a2a 100%);box-shadow:1px 0 1px #1a4a1a"></div>
 <svg style="position:absolute;left:7px;top:8px" width="20" height="18" viewBox="0 0 20 18"><path d="M2 2.5 C4.5 1 7 1 10 2.5 L9 8 C6 6.5 3.5 6.5 1 8z" fill="#f0602a"/><path d="M11 3 C13.5 4.5 16.5 4.5 19.5 3 L18.5 8.5 C15.5 10 12.5 10 10 8.5z" fill="#5ab030"/><path d="M0.8 9 C3.3 7.5 5.8 7.5 8.8 9 L7.8 14.5 C4.8 13 2.3 13 -0.2 14.5z" fill="#3a80e8"/><path d="M9.8 9.5 C12.3 11 15.3 11 18.3 9.5 L17.3 15 C14.3 16.5 11.3 16.5 8.8 15z" fill="#f8c020"/></svg>
 <div class="tb" style="left:32px;top:9px;color:#f4fff0;font-size:16.4px;line-height:18px;font-weight:700;font-style:italic;text-shadow:1px 1px 1px #1a5a1a">пуск</div>
 <div style="left:92px;top:7px;width:2px;height:22px;border-left:1px dotted #4a80e0"></div>
 <svg style="position:absolute;left:104px;top:10px" width="14" height="14" viewBox="0 0 14 14"><rect x="1" y="2" width="9" height="11" fill="#f0f0e8" stroke="#a0a090" stroke-width="0.8"/><path d="M6 9 L13 4" stroke="#5a8ad0" stroke-width="2"/></svg>
 <svg style="position:absolute;left:125px;top:8px" width="16" height="16" viewBox="0 0 16 16"><path d="M2.6 9.3 H13.4 q0.3-6.5-5.3-6.5 q-5.6 0-5.6 6.2 q0 6.2 5.8 6.2 q3.4 0 4.7-2.5 h-3.4 q-0.6 0.8-1.4 0.8 q-2.4 0-2.4-3.2z M5.4 7.3 q0.3-2.3 2.7-2.3 q2.3 0 2.5 2.3z" fill="#2a80e0"/><path d="M0.5 11 q1.5-8 14.5-8.5 q-4 -1 -8 0.5" stroke="#f0b020" stroke-width="1.1" fill="none"/></svg>
 <svg style="position:absolute;left:146px;top:10px" width="15" height="13" viewBox="0 0 15 13"><path d="M0.5 2 H6 L7 3.5 H14.5 V12.5 H0.5z" fill="#f0d070" stroke="#b09040" stroke-width="0.8"/><rect x="4" y="5" width="7" height="6" fill="#f8f8f0"/></svg>
 <div class="tb" style="left:173px;top:7px;color:#c8dcff;font-size:9px">»</div>
 <div style="left:186px;top:7px;width:2px;height:22px;border-left:1px dotted #4a80e0"></div>
 <div style="left:194px;top:7px;width:125px;height:24px;background:#1e4cb8;border-radius:2px;box-shadow:inset 1px 1px 1px #1a3a90"></div>
 <svg style="position:absolute;left:202px;top:11px" width="16" height="16" viewBox="0 0 16 16"><path d="M3.5 0.8 H11.5 L14.5 3.8 V15.2 H3.5z" fill="#fbfbf6" stroke="#b8b8b0" stroke-width="0.6"/><path d="M11.5 0.8 V3.8 H14.5" fill="#e0e0d8"/><path d="M5.2 9.3 H12.4 q0.3-4.6-3.6-4.6 q-3.8 0-3.8 4.3 q0 4.3 4 4.3 q2.3 0 3.2-1.6 h-2.3 q-0.4 0.5-1 0.5 q-1.6 0-1.6-2z M7 8 q0.2-1.6 1.8-1.6 q1.6 0 1.7 1.6z" fill="#1f6fd0"/><path d="M0.8 10 q2-6 11.5-5.5" stroke="#3a88e0" stroke-width="1.2" fill="none"/></svg>
 <div class="tb" style="left:220px;top:13px;color:#fff;font-size:10.9px">Клуб владельц...</div>
 <div style="left:772px;top:3px;width:35px;height:29px;background:#2458cc"></div>
 <div class="tb" style="left:782px;top:11px;color:#d8e8ff;font-size:10.5px">RU</div>
 <div style="left:807px;top:1px;width:191px;height:31px;background:linear-gradient(#1ba0f8 0%,#0c8cf0 10%,#0b84ea 50%,#0a7ee0 90%,#0a70d0 100%);border-left:1px solid #1050a8;box-shadow:inset 1px 0 1px #60c0ff"></div>
 <svg style="position:absolute;left:814px;top:7px" width="16" height="17" viewBox="0 0 16 17"><path d="M1 1 H6 V6.5 L10.5 1 H15 L9 8.5 L15 16 H10 L6 10.5 V16 H1z" fill="#e82028" stroke="#fff" stroke-width="0.7"/><rect x="9.5" y="11" width="5" height="5" fill="#111" stroke="#fff" stroke-width="0.6"/></svg>
 <svg style="position:absolute;left:833px;top:7px" width="17" height="17" viewBox="0 0 17 17"><path d="M1 2 H6.5 L8.5 9.5 L11 2 H16 L10.5 16 H6.5z" fill="#d8202c" stroke="#801018" stroke-width="0.6"/><path d="M11 2 H16 L14 7z" fill="#f06060"/></svg>
 <svg style="position:absolute;left:849px;top:7px" width="16" height="18" viewBox="0 0 16 18"><circle cx="8" cy="8" r="7" fill="#c8ccd4" stroke="#707a88" stroke-width="0.8"/><circle cx="8" cy="8" r="3.8" fill="#5a7aa8" stroke="#2a3a58" stroke-width="0.8"/><rect x="4" y="15" width="8" height="2.5" fill="#5a6470"/></svg>
 <svg style="position:absolute;left:866px;top:7px" width="17" height="18" viewBox="0 0 17 18"><path d="M2 3 q6-4 13 0 q2 8-6 14 q-8-5-7-14z" fill="#8ad040" stroke="#5a9a20" stroke-width="0.7"/><path d="M5 8.5 L8 11.5 L12.5 6" stroke="#fff" stroke-width="1.8" fill="none"/></svg>
 <svg style="position:absolute;left:884px;top:9px" width="15" height="14" viewBox="0 0 15 14"><path d="M1 6 L4 3 H14 V11 H4z" fill="#b8e070" stroke="#6a9a30" stroke-width="0.7"/><circle cx="4" cy="7" r="1.3" fill="#fff"/><path d="M7 6 H12 M7 8 H11" stroke="#6a9a30" stroke-width="0.8"/></svg>
 <div style="left:901px;top:6px;width:16px;height:18px;background:#2a4a70;border:1px solid #102040"></div>
 <svg style="position:absolute;left:902px;top:8px" width="14" height="14" viewBox="0 0 14 14"><path d="M1 7 H13 V12 H1z" fill="#d8d8d8"/><path d="M3 2 L10 1 L11 7 H3z" fill="#fafafa"/><circle cx="5" cy="10" r="1" fill="#40a040"/></svg>
 <svg style="position:absolute;left:918px;top:6px" width="15" height="18" viewBox="0 0 15 18"><path d="M2 1 H8 V4 H11 L5 9 L-1 4 H2z" fill="#30b030" transform="translate(1 0)"/><path d="M1 10 H13 V16 H1z" fill="#8aa0b8" stroke="#3a5068" stroke-width="0.8"/><rect x="3" y="11.5" width="8" height="3" fill="#d0dce8"/></svg>
 <svg style="position:absolute;left:935px;top:7px" width="15" height="18" viewBox="0 0 15 18"><path d="M1 6 H4 L11 1 V17 L4 12 H1z" fill="#e8703a" stroke="#903818" stroke-width="0.7"/><path d="M11 1 V17 L13.5 15 V3z" fill="#c04a20"/></svg>
 <div class="tb" style="left:957px;top:12px;color:#d8f0ff;font-size:11.4px">21:08</div>
</div>
</body></html>
